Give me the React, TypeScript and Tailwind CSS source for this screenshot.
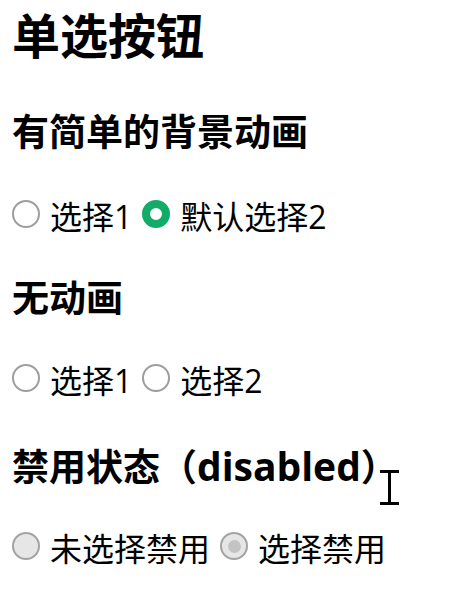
import React from 'react'

const font = { fontFamily: '"Open Sans", "Noto Sans CJK SC", sans-serif' }

type RadioProps = {
  label: string
  checked?: boolean
  disabled?: boolean
}

function Radio({ label, checked, disabled }: RadioProps) {
  let circle = 'border-2 border-[#9e9e9e] bg-white'
  let dot = null
  if (checked && !disabled) {
    circle = 'border-[8px] border-[#12ab68] bg-white'
  } else if (disabled) {
    circle = 'border-2 border-[#a3a3a3] bg-[#e6e6e6]'
    if (checked) dot = <span className="w-[13px] h-[13px] rounded-full bg-[#c3c3c3]" />
  }

  return (
    <label className="flex items-center mr-[10px]">
      <span className={`w-[28px] h-[28px] shrink-0 rounded-full flex items-center justify-center -mt-[6px] ${circle}`}>
        {dot}
      </span>
      <span className="ml-[10px] text-[32px] leading-[48px] text-black">{label}</span>
    </label>
  )
}

export default function App() {
  return (
    <div className="relative min-h-[599px] bg-white pl-3 text-black" style={font}>
      <h1 className="text-[48px] leading-[72px] font-bold">单选按钮</h1>

      <h2 className="mt-[36px] text-[37px] leading-[48px] font-bold">有简单的背景动画</h2>
      <div className="mt-[37px] flex items-center">
        <Radio label="选择1" />
        <Radio label="默认选择2" checked />
      </div>

      <h2 className="mt-[33px] text-[37px] leading-[48px] font-bold">无动画</h2>
      <div className="mt-[35px] flex items-center">
        <Radio label="选择1" />
        <Radio label="选择2" />
      </div>

      <h2 className="mt-[37px] text-[37px] leading-[48px] font-bold">
        禁用状态（<span className="text-[39px]">disabled</span>）
      </h2>
      <div className="mt-[34px] flex items-center">
        <Radio label="未选择禁用" disabled />
        <Radio label="选择禁用" checked disabled />
      </div>

      {/* text cursor captured in the screenshot */}
      <svg className="absolute left-[380px] top-[470px]" width="19" height="35" viewBox="0 0 19 35">
        <path d="M0 1.5h19M0 33.5h19M9.5 1.5v32" stroke="#000" strokeWidth="3" fill="none" />
      </svg>
    </div>
  )
}
